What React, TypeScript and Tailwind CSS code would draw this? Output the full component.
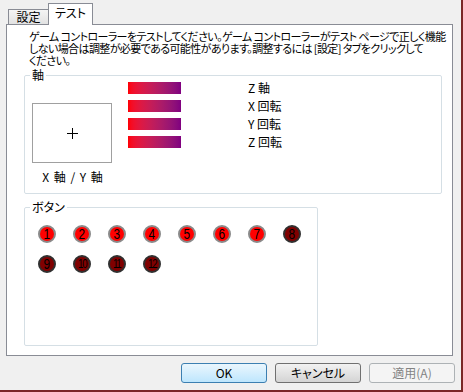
import React from "react";

const jp = "font-['Noto_Sans_CJK_JP','Noto_Sans',sans-serif]";

function Circle({ n, on }: { n: number; on: boolean }) {
  return (
    <div
      className={
        "w-[18px] h-[18px] rounded-full flex items-center justify-center border-[2px] " +
        (on ? "bg-[#ff0000] border-[#8a8a8a]" : "bg-[#800000] border-[#303030]")
      }
    >
      <span
        className={
          "font-['Liberation_Sans',sans-serif] leading-none text-black font-light " +
          (n >= 10 ? "text-[12px] tracking-[-1.5px] scale-x-[0.8]" : "text-[14px] scale-x-[0.85]")
        }
      >
        {n}
      </span>
    </div>
  );
}

export default function App() {
  const bars = ["Z 軸", "X 回転", "Y 回転", "Z 回転"];
  const buttons = Array.from({ length: 12 }, (_, i) => i + 1);
  return (
    <div
      className={`w-[463px] h-[392px] bg-[#f0f0f0] border-r-[2px] border-b-[2px] border-[#7a2626] flex flex-col text-black ${jp} text-[11px] [font-feature-settings:'palt']`}
    >
      {/* tabs */}
      <div className="h-[24px] flex items-end pl-[8px]">
        <div className="w-[40px] h-[15px] border-l border-t border-[#898c95] bg-gradient-to-b from-[#f4f4f4] to-[#e2e2e2] flex items-center justify-center text-[12px] leading-none">
          設定
        </div>
        <div className="relative z-10 -mb-px w-[45px] h-[22px] border-l border-t border-r border-[#898c95] bg-white flex items-start justify-center pt-[3px] text-[12px] leading-[12px]">
          テスト
        </div>
      </div>

      {/* panel */}
      <div className="ml-[6px] w-[447px] h-[332px] border border-[#898c95] bg-white flex flex-col pl-[17px] overflow-hidden">
        <p className="pl-[5px] pt-[5px] leading-[12px] whitespace-nowrap tracking-[-0.6px]">
          ゲーム コントローラーをテストしてください。ゲーム コントローラーがテスト ページで正しく機能
          <br />
          しない場合は調整が必要である可能性があります。調整するには [設定] タブをクリックして
          <br />
          ください。
        </p>

        <fieldset className="mt-[3px] w-[418px] h-[125px] border border-[#d5dfe5] rounded-[2px]">
          <legend className="ml-[5px] px-[2px] text-[12px] leading-[12px]">軸</legend>
          <div className="flex">
            <div className="ml-[7px] mt-[22px] flex flex-col items-center">
              <div className="w-[80px] h-[60px] border border-[#a0a0a0] flex items-center justify-center">
                <svg width="11" height="11" viewBox="0 0 11 11">
                  <path d="M5.5 0v11M0 5.5h11" stroke="#000" strokeWidth="1" />
                </svg>
              </div>
              <div className="mt-[8px] text-[12px] leading-[12px] tracking-[1px] pl-[2px]">X 軸 / Y 軸</div>
            </div>
            <div className="ml-[16px] mt-[1px] flex flex-col gap-[6px]">
              {bars.map((b) => (
                <div key={b} className="w-[53px] h-[12px] bg-gradient-to-r from-[#ff0000] to-[#800080]" />
              ))}
            </div>
            <div className="ml-[67px] mt-[1px] flex flex-col gap-[6px]">
              {bars.map((b) => (
                <div key={b} className="h-[12px] text-[12px] leading-[12px] whitespace-nowrap">
                  {b}
                </div>
              ))}
            </div>
          </div>
        </fieldset>

        <fieldset className="mt-[7px] w-[294px] h-[145px] border border-[#d5dfe5] rounded-[2px]">
          <legend className="ml-[5px] px-[2px] text-[12px] leading-[12px]">ボタン</legend>
          <div className="ml-[13px] mt-[12px] w-[263px] flex flex-wrap gap-x-[17px] gap-y-[12px]">
            {buttons.map((n) => (
              <Circle key={n} n={n} on={n <= 7} />
            ))}
          </div>
        </fieldset>
      </div>

      {/* bottom buttons */}
      <div className="mt-[7px] pr-[6px] flex justify-end gap-[8px] text-[12px]">
        <button className="w-[86px] h-[20px] rounded-[3px] border border-[#3c7fb1] bg-gradient-to-b from-[#eaf6fd] to-[#bee6fd] leading-none">
          OK
        </button>
        <button className="w-[86px] h-[20px] rounded-[3px] border border-[#707070] bg-gradient-to-b from-[#f2f2f2] to-[#d4d4d4] leading-none">
          キャンセル
        </button>
        <button className="w-[86px] h-[20px] rounded-[3px] border border-[#adb2b5] bg-[#f4f4f4] text-[#838383] leading-none">
          適用(A)
        </button>
      </div>
    </div>
  );
}
